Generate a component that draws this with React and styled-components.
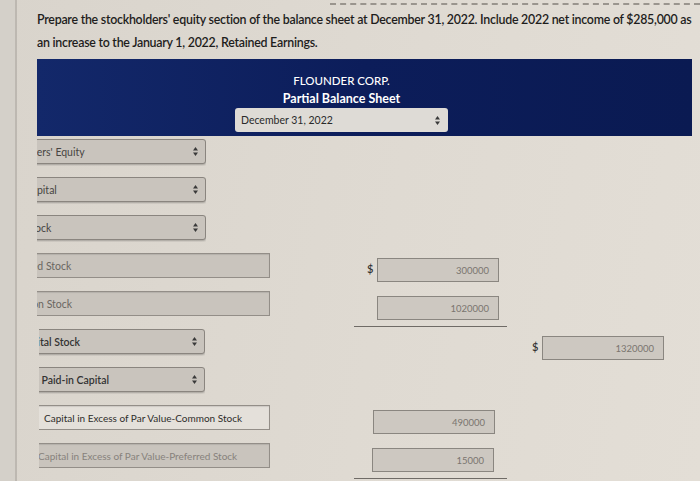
import styled, { createGlobalStyle } from "styled-components";

const GlobalStyle = createGlobalStyle`
  html, body {
    margin: 0;
    padding: 0;
    background: #dbd6ce;
    font-family: Lato, "Open Sans", "Liberation Sans", sans-serif;
  }
`;

const Page = styled.div`
  width: 700px;
  height: 481px;
  display: flex;
  overflow: hidden;
  background: linear-gradient(100deg, #d9d4cc 0%, #dfdad2 55%, #e3ded6 100%);
  position: relative;
`;

const Gutter = styled.div`
  width: 15px;
  flex: none;
  background: #d4d0c9;
  border-right: 2px solid #bdb8b1;
`;

const DashedEdge = styled.div`
  position: absolute;
  top: 3px;
  left: 330px;
  right: 0;
  border-top: 2px dashed #9a958e;
`;

const Main = styled.div`
  flex: 1;
  min-width: 0;
  padding: 8px 0 0 20px;
  display: flex;
  flex-direction: column;
`;

const Prompt = styled.p`
  margin: 0;
  font-size: 12.4px;
  line-height: 23px;
  font-weight: 600;
  color: #1e1d1c;
  letter-spacing: -0.25px;
  white-space: nowrap;
`;

const Header = styled.div`
  margin-top: 5px;
  width: 655px;
  height: 82px;
  box-sizing: border-box;
  padding: 13px 46px 0 0;
  background: linear-gradient(90deg, #13286a 0%, #0c1d5a 50%, #0a1a52 100%);
  display: flex;
  flex-direction: column;
  align-items: center;
  color: #fff;
`;

const Company = styled.div`
  font-size: 11.5px;
  font-weight: 500;
  line-height: 18px;
`;

const Title = styled.div`
  font-size: 12.5px;
  font-weight: 700;
  line-height: 17px;
`;

const DateSelect = styled.div`
  margin-top: 1px;
  width: 213px;
  height: 24px;
  box-sizing: border-box;
  background: #dedbd6;
  border-radius: 3px;
  padding: 0 8px 0 6px;
  display: flex;
  align-items: center;
  justify-content: space-between;
  font-size: 10.5px;
  color: #2a2a2a;
`;

const Rows = styled.div`
  margin-top: 3px;
  display: grid;
  grid-template-columns: 317px 165px 150px;
  grid-auto-rows: 38px;
`;

const LabelCell = styled.div`
  padding-left: ${({ $inset }) => $inset || 0}px;
`;

const Clip = styled.div`
  width: ${({ $width }) => $width}px;
  height: 27px;
  overflow: hidden;
`;

const Field = styled.div`
  margin-left: ${({ $shift }) => -$shift}px;
  width: ${({ $width, $shift }) => $width + $shift}px;
  height: 25px;
  box-sizing: border-box;
  display: flex;
  align-items: center;
  justify-content: space-between;
  padding: 0 7px 0 6px;
  border: 1.5px solid ${({ $select }) => ($select ? "#8a857f" : "#938e88")};
  border-radius: ${({ $select }) => ($select ? "3px" : "0")};
  background: ${({ $light }) => ($light ? "#e4e0da" : "#c9c4bd")};
  box-shadow: ${({ $select }) =>
    $select ? "0 1px 2px rgba(0,0,0,0.25)" : "inset 0 1px 1px rgba(0,0,0,0.1)"};
  font-size: ${({ $size }) => $size || 10.5}px;
  font-weight: ${({ $bold }) => ($bold ? 600 : 400)};
  color: ${({ $tone }) => $tone || "#474542"};
  white-space: nowrap;
`;

const AmountCell = styled.div`
  display: flex;
  align-items: flex-start;
  padding: ${({ $top }) => $top}px 0 0 ${({ $pad }) => $pad}px;
  box-sizing: border-box;
  height: 36px;
  border-bottom: ${({ $rule }) => ($rule ? "1.5px solid #6f6b66" : "none")};
  margin-right: ${({ $ruleEnd }) => $ruleEnd || 0}px;
`;

const Dollar = styled.span`
  width: ${({ $w }) => $w || 10}px;
  flex: none;
  margin-top: 4px;
  font-size: 11px;
  font-weight: 600;
  color: #333;
`;

const Amount = styled.div`
  width: 122px;
  height: 24px;
  box-sizing: border-box;
  margin-left: ${({ $offset }) => $offset || 0}px;
  border: 1.5px solid #8a8680;
  background: #cdc8c1;
  display: flex;
  align-items: center;
  justify-content: flex-end;
  padding-right: 9px;
  font-size: 9.5px;
  color: #7a756f;
`;

const Arrows = () => (
  <svg width="5" height="9" viewBox="0 0 5 9">
    <path d="M2.5 0 L5 3.5 H0 Z" fill="#3a3a3a" />
    <path d="M2.5 9 L5 5.5 H0 Z" fill="#3a3a3a" />
  </svg>
);

const rows = [
  { text: "Stockholders' Equity", shift: 53, select: true, width: 169 },
  { text: "Paid-in Capital", shift: 54, select: true, width: 169 },
  { text: "Capital Stock", shift: 53, select: true, width: 169 },
  { text: "Preferred Stock", shift: 44, width: 233, tone: "#6a6661", col1: "300000", dollar: true },
  { text: "Common Stock", shift: 42, width: 233, tone: "#6a6661", col1: "1020000", rule: true },
  { text: "Total Capital Stock", shift: 52, select: true, width: 166, inset: 2, bold: true, tone: "#333", col2: "1320000" },
  { text: "Additional Paid-in Capital", shift: 55, select: true, width: 166, inset: 2, bold: true, tone: "#333" },
  { text: "Capital in Excess of Par Value-Common Stock", shift: 2, width: 231, inset: 2, light: true, size: 10, tone: "#2e2d2b", col1: "490000", col1Offset: -4 },
  { text: "Capital in Excess of Par Value-Preferred Stock", shift: 8, width: 231, inset: 2, size: 10, tone: "#87827c", col1: "15000", col1Offset: -5, rule: true },
];

export default function App() {
  return (
    <>
      <GlobalStyle />
      <Page>
        <DashedEdge />
        <Gutter />
        <Main>
          <Prompt>
            Prepare the stockholders' equity section of the balance sheet at December 31, 2022. Include 2022 net income of $285,000 as
            <br />
            an increase to the January 1, 2022, Retained Earnings.
          </Prompt>
          <Header>
            <Company>FLOUNDER CORP.</Company>
            <Title>Partial Balance Sheet</Title>
            <DateSelect>
              <span>December 31, 2022</span>
              <Arrows />
            </DateSelect>
          </Header>
          <Rows>
            {rows.map((row) => (
              <Row key={row.text} row={row} />
            ))}
          </Rows>
        </Main>
      </Page>
    </>
  );
}

function Row({ row }) {
  return (
    <>
      <LabelCell $inset={row.inset}>
        <Clip $width={row.width}>
          <Field
            $width={row.width}
            $shift={row.shift}
            $select={row.select}
            $light={row.light}
            $bold={row.bold}
            $size={row.size}
            $tone={row.tone}
          >
            <span>{row.text}</span>
            {row.select && <Arrows />}
          </Field>
        </Clip>
      </LabelCell>
      <AmountCell $pad={row.rule ? 3 : 13} $rule={row.rule} $top={5} $ruleEnd={12}>
        {row.col1 && (
          <>
            <Dollar $w={row.rule ? 20 : 10}>{row.dollar ? "$" : ""}</Dollar>
            <Amount $offset={row.col1Offset}>{row.col1}</Amount>
          </>
        )}
      </AmountCell>
      <AmountCell $pad={13} $top={7}>
        {row.col2 && (
          <>
            <Dollar>$</Dollar>
            <Amount>{row.col2}</Amount>
          </>
        )}
      </AmountCell>
    </>
  );
}
